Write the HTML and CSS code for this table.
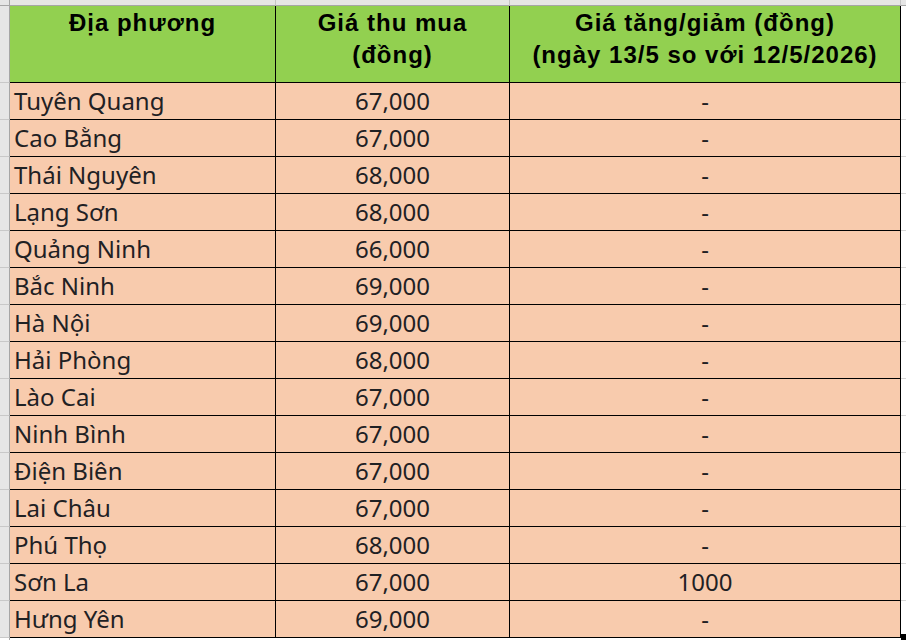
FILE: index.html
```html
<!DOCTYPE html>
<html lang="vi">
<head>
<meta charset="utf-8">
<title>Giá thu mua</title>
<link rel="stylesheet" href="styles.css">
</head>
<body>
<div class="sheet">
  <div class="row">
    <div class="corner"></div><div class="colhead"></div><div class="colhead"></div><div class="colhead"></div><div class="colhead last"></div>
  </div>
  <div class="row">
    <div class="rowhead"></div>
    <div class="th">Địa phương</div>
    <div class="th">Giá thu mua<br>(đồng)</div>
    <div class="th">Giá tăng/giảm (đồng)<br>(ngày 13/5 so với 12/5/2026)</div>
    <div class="outside"></div>
  </div>
  <div class="row"><div class="rowhead"></div><div class="td name">Tuyên Quang</div><div class="td num">67,000</div><div class="td num">-</div><div class="outside"></div></div>
  <div class="row"><div class="rowhead"></div><div class="td name">Cao Bằng</div><div class="td num">67,000</div><div class="td num">-</div><div class="outside"></div></div>
  <div class="row"><div class="rowhead"></div><div class="td name">Thái Nguyên</div><div class="td num">68,000</div><div class="td num">-</div><div class="outside"></div></div>
  <div class="row"><div class="rowhead"></div><div class="td name">Lạng Sơn</div><div class="td num">68,000</div><div class="td num">-</div><div class="outside"></div></div>
  <div class="row"><div class="rowhead"></div><div class="td name">Quảng Ninh</div><div class="td num">66,000</div><div class="td num">-</div><div class="outside"></div></div>
  <div class="row"><div class="rowhead"></div><div class="td name">Bắc Ninh</div><div class="td num">69,000</div><div class="td num">-</div><div class="outside"></div></div>
  <div class="row"><div class="rowhead"></div><div class="td name">Hà Nội</div><div class="td num">69,000</div><div class="td num">-</div><div class="outside"></div></div>
  <div class="row"><div class="rowhead"></div><div class="td name">Hải Phòng</div><div class="td num">68,000</div><div class="td num">-</div><div class="outside"></div></div>
  <div class="row"><div class="rowhead"></div><div class="td name">Lào Cai</div><div class="td num">67,000</div><div class="td num">-</div><div class="outside"></div></div>
  <div class="row"><div class="rowhead"></div><div class="td name">Ninh Bình</div><div class="td num">67,000</div><div class="td num">-</div><div class="outside"></div></div>
  <div class="row"><div class="rowhead"></div><div class="td name">Điện Biên</div><div class="td num">67,000</div><div class="td num">-</div><div class="outside"></div></div>
  <div class="row"><div class="rowhead"></div><div class="td name">Lai Châu</div><div class="td num">67,000</div><div class="td num">-</div><div class="outside"></div></div>
  <div class="row"><div class="rowhead"></div><div class="td name">Phú Thọ</div><div class="td num">68,000</div><div class="td num">-</div><div class="outside"></div></div>
  <div class="row"><div class="rowhead"></div><div class="td name">Sơn La</div><div class="td num">67,000</div><div class="td num">1000</div><div class="outside"></div></div>
  <div class="row"><div class="rowhead"></div><div class="td name">Hưng Yên</div><div class="td num">69,000</div><div class="td num">-</div><div class="outside"></div></div>
  <div class="row"><div class="rowhead tail"></div><div class="tail"></div><div class="tail"></div><div class="tail"></div><div class="tail"></div></div>
  <div class="handle"></div>
</div>
</body>
</html>
```

FILE: styles.css
```css
* { box-sizing: border-box; }
html, body { margin: 0; padding: 0; background: #ffffff; }
body { width: 906px; height: 640px; overflow: hidden; }

.sheet {
  position: relative;
  display: grid;
  grid-template-columns: 10px 266px 234px 391px 5px;
  grid-template-rows: 6px 77px repeat(15, 37px) 3px;
}
.row { display: contents; }

.corner, .colhead {
  background: #e6e6e6;
  border-bottom: 1px solid #a6a6a6;
  border-right: 1px solid #c4c4c4;
}
.corner { border-right-color: #a6a6a6; }
.colhead.last { border-right: none; }

.rowhead {
  background: #e6e6e6;
  border-right: 1px solid #a6a6a6;
  border-bottom: 1px solid #c8c8c8;
}
.rowhead.tail { border-bottom: none; }

.outside {
  background: #ffffff;
  border-bottom: 1px solid #d6d6d6;
}
.tail { background: #ffffff; }

.th {
  background: #92d050;
  border-right: 1px solid #000;
  border-bottom: 1px solid #000;
  font-family: "Liberation Sans", Arial, sans-serif;
  font-weight: bold;
  font-size: 24px;
  letter-spacing: 1px;
  line-height: 32px;
  color: #000;
  text-align: center;
  padding-top: 1px;
}

.td {
  background: #f8cbad;
  border-right: 1px solid #000;
  border-bottom: 1px solid #000;
  font-family: "Noto Sans", "Open Sans", sans-serif;
  font-size: 24px;
  line-height: 36px;
  color: #1f2124;
  white-space: nowrap;
}
.td.name { padding-left: 4px; }
.td.num { text-align: center; }

.handle {
  position: absolute;
  left: 901px;
  top: 634px;
  width: 5px;
  height: 6px;
  background: #000;
}
```
